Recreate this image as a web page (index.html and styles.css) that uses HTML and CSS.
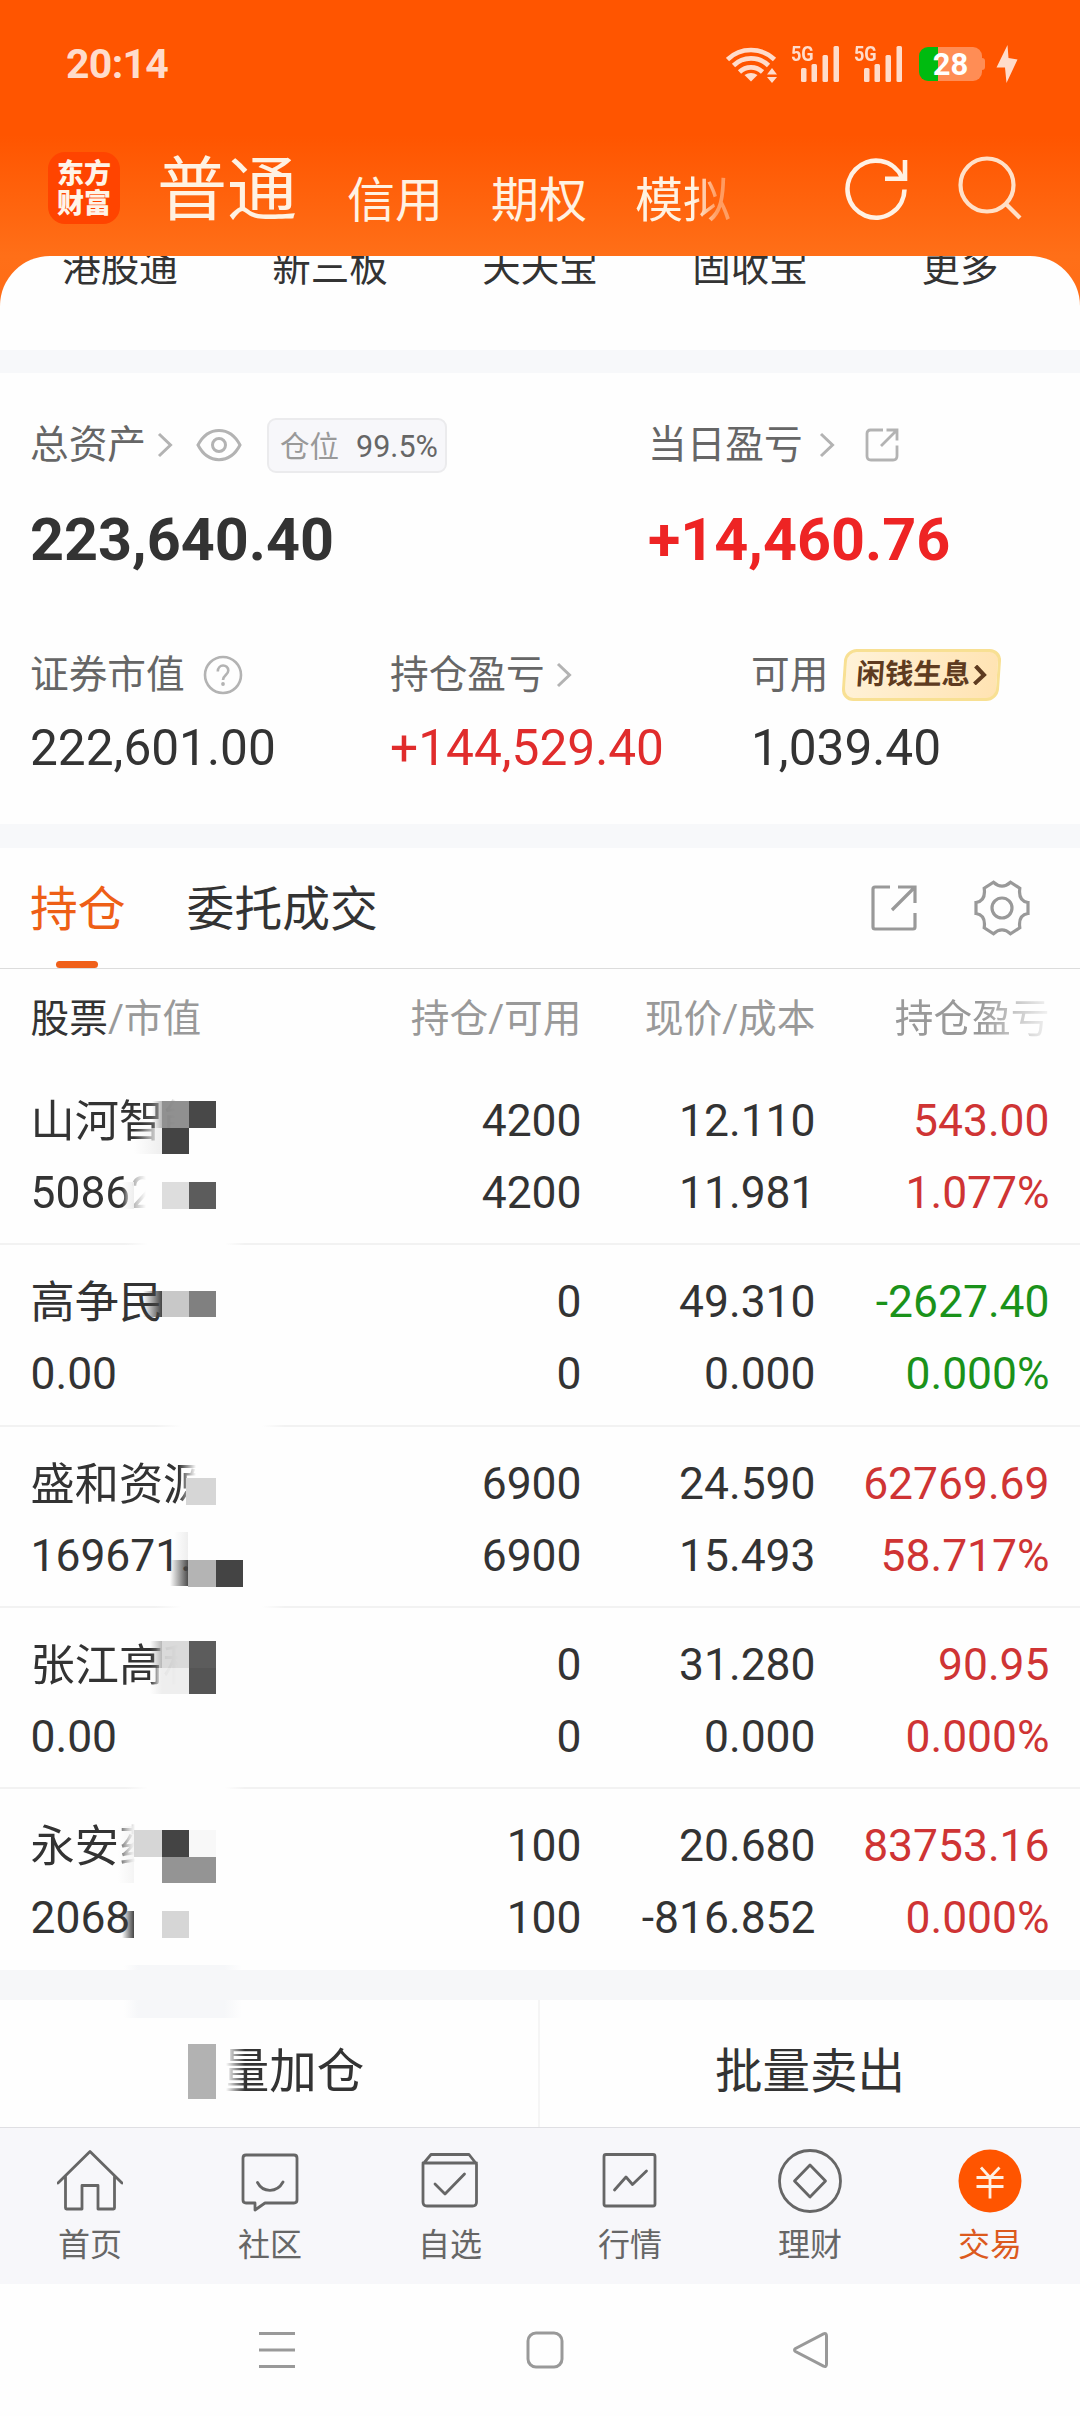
FILE: index.html
```html
<!DOCTYPE html>
<html lang="zh-CN">
<head>
<meta charset="utf-8">
<title>交易</title>
<link rel="stylesheet" href="styles.css">
</head>
<body>
<div class="phone">
  <header class="top">
    <div class="status">
      <span class="time">20:14</span>
      <div class="status-icons">
        <svg class="wifi" width="52" height="38" viewBox="0 0 52 38" fill="none" stroke="#ffdccb" stroke-width="4.6">
          <path d="M1.500 14.500a34 34 0 0 1 47 0M7.500 20.500a25 25 0 0 1 35 0M13.500 27a16.500 16.500 0 0 1 23 0"/>
          <path d="M25 36.500l-6.500-6.500q6.500-4 13 0z" fill="#ffdccb" stroke="none"/>
          <path d="M41 29.500l5-6.500 5 6.500zM41 32l5 6 5-6z" fill="#ffdccb" stroke="none"/>
        </svg>
        <div class="signal">
          <span class="net">5G</span>
          <svg width="38" height="36" viewBox="0 0 38 36" fill="#ffdccb"><rect x="0" y="22" width="5.500" height="14" rx="1.500"/><rect x="10.500" y="18" width="5.500" height="18" rx="1.500"/><rect x="21.500" y="9" width="5.500" height="27" rx="1.500"/><rect x="32.500" y="0" width="5.500" height="36" rx="1.500"/></svg>
        </div>
        <div class="signal second">
          <span class="net">5G</span>
          <svg width="38" height="36" viewBox="0 0 38 36" fill="#ffdccb"><rect x="0" y="22" width="5.500" height="14" rx="1.500"/><rect x="10.500" y="18" width="5.500" height="18" rx="1.500"/><rect x="21.500" y="9" width="5.500" height="27" rx="1.500"/><rect x="32.500" y="0" width="5.500" height="36" rx="1.500"/></svg>
        </div>
        <div class="battery">28</div>
        <svg class="bolt" width="22" height="38" viewBox="0 0 22 38" fill="#ffdccb"><path d="M11.500 0L.5 22.500h8.500L10.500 38 21.500 14.500 12.500 13z"/></svg>
      </div>
    </div>
    <div class="accounts">
      <div class="logo"><span>东方</span><span>财富</span></div>
      <div class="account-tabs">
        <span class="account active">普通</span>
        <span class="account">信用</span>
        <span class="account">期权</span>
        <span class="account faded">模拟</span>
      </div>
      <svg class="refresh" width="64" height="64" viewBox="0 0 64 64" fill="none" stroke="#fff1e4" stroke-width="4.6"><path d="M60.500 33.500A28.500 28.500 0 1 1 58 21.500"/><path d="M61 4v18.800H41"/></svg>
      <svg class="search" width="64" height="64" viewBox="0 0 64 64" fill="none" stroke="#ffe0c8" stroke-width="4.200"><circle cx="29" cy="29" r="26.500"/><path d="M48 48l14 14"/></svg>
    </div>
  </header>

  <main>
    <nav class="shortcuts"><span>港股通</span><span>新三板</span><span>天天宝</span><span>固收宝</span><span>更多</span></nav>

    <section class="assets">
      <div class="row-main">
        <div>
          <div class="label">总资产
            <svg class="chev" width="16" height="26" viewBox="0 0 16 26"><path d="M2 2l11.500 11L2 24"/></svg>
            <svg class="eye" width="46" height="34" viewBox="0 0 46 34"><path d="M2 17C12-2.500 34-2.500 44 17 34 36.500 12 36.500 2 17z"/><circle cx="23" cy="17" r="6.500"/></svg>
            <span class="ratio">仓位<b>99.5%</b></span>
          </div>
          <div class="big">223,640.40</div>
        </div>
        <div>
          <div class="label">当日盈亏
            <svg class="chev wide" width="16" height="26" viewBox="0 0 16 26"><path d="M2 2l11.500 11L2 24"/></svg>
            <svg class="share-small" width="36" height="36" viewBox="0 0 36 36"><path d="M19 3H6.500Q3 3 3 6.500V29q0 4 4 4h22q4 0 4-4V18.500M22.500 3H33v10.500M32.500 3.500L17 19"/></svg>
          </div>
          <div class="big red">+14,460.76</div>
        </div>
      </div>
      <div class="row-sub">
        <div>
          <div class="label">证券市值
            <svg class="help" width="40" height="40" viewBox="0 0 40 40"><circle cx="20" cy="20" r="18"/><path d="M14.800 16.500c0-8 10.500-7.500 10.500-1 0 4.500-5.300 4.500-5.300 9.500"/><circle class="dot" cx="20" cy="29" r="1.900"/></svg>
          </div>
          <div class="mid">222,601.00</div>
        </div>
        <div>
          <div class="label">持仓盈亏
            <svg class="chev near" width="16" height="26" viewBox="0 0 16 26"><path d="M2 2l11.500 11L2 24"/></svg>
          </div>
          <div class="mid red">+144,529.40</div>
        </div>
        <div>
          <div class="label">可用
            <span class="promo">闲钱生息<svg width="14" height="20" viewBox="0 0 14 20"><path d="M2 1l9 9-9 9"/></svg></span>
          </div>
          <div class="mid">1,039.40</div>
        </div>
      </div>
    </section>

    <section class="holdings">
      <div class="tabs">
        <span class="tab active">持仓</span>
        <span class="tab">委托成交</span>
        <svg class="share" width="48" height="48" viewBox="0 0 48 48"><path d="M20 3H5Q3 3 3 5v38q0 2 2 2h38q2 0 2-2V29M28 3h17v16M44.500 3.500L22 26"/></svg>
        <svg class="gear" width="58" height="58" viewBox="-29 -29 58 58"><path d="M-26 -5.500V5.500Q-16 7-17.800 19.800L-8.500 25.800Q0 18 8.500 25.800L17.800 19.800Q16 7 26 5.500V-5.500Q16-7 17.800-19.800L8.500-25.800Q0-18-8.500-25.800L-17.800-19.800Q-16-7-26-5.500z"/><circle r="10"/></svg>
      </div>
      <div class="grid head"><span><em>股票</em>/市值</span><span>持仓/可用</span><span>现价/成本</span><span class="head-fade">持仓盈亏</span></div>

      <div class="grid item gap-a">
        <span class="name fade-1">山河智能</span><span>4200</span><span>12.110</span><span class="up">543.00</span>
        <span class="fade-2">50862</span><span>4200</span><span>11.981</span><span class="up">1.077%</span>
      </div>
      <div class="grid item gap-b">
        <span class="name">高争民</span><span>0</span><span>49.310</span><span class="down">-2627.40</span>
        <span>0.00</span><span>0</span><span>0.000</span><span class="down">0.000%</span>
      </div>
      <div class="grid item gap-b">
        <span class="name fade-3">盛和资源</span><span>6900</span><span>24.590</span><span class="up">62769.69</span>
        <span>169671.</span><span>6900</span><span>15.493</span><span class="up">58.717%</span>
      </div>
      <div class="grid item gap-a">
        <span class="name fade-4">张江高科</span><span>0</span><span>31.280</span><span class="up">90.95</span>
        <span>0.00</span><span>0</span><span>0.000</span><span class="up">0.000%</span>
      </div>
      <div class="grid item last">
        <span class="name fade-5">永安药</span><span>100</span><span>20.680</span><span class="up">83753.16</span>
        <span>2068</span><span>100</span><span>-816.852</span><span class="up">0.000%</span>
      </div>

      <!-- privacy mosaic laid over the names and values -->
      <svg class="mosaic" width="300" height="1040" viewBox="0 1064 300 1040">
        <defs>
          <linearGradient id="g1"><stop offset="0" stop-color="#999" stop-opacity="0"/><stop offset="1" stop-color="#999" stop-opacity=".7"/></linearGradient>
          <linearGradient id="g2"><stop offset="0" stop-color="#444" stop-opacity="0"/><stop offset="1" stop-color="#444"/></linearGradient>
          <linearGradient id="g3"><stop offset="0" stop-color="#eee" stop-opacity="0"/><stop offset="1" stop-color="#eee"/></linearGradient>
          <linearGradient id="g4"><stop offset="0" stop-color="#f6f7f9" stop-opacity="0"/><stop offset=".12" stop-color="#f6f7f9"/><stop offset=".85" stop-color="#f6f7f9"/><stop offset="1" stop-color="#f6f7f9" stop-opacity="0"/></linearGradient>
        </defs>
        <rect x="152" y="1101" width="10" height="27" fill="url(#g1)"/>
        <rect x="162" y="1101" width="27" height="27" fill="#888" fill-opacity=".93"/>
        <rect x="189" y="1101" width="27" height="27" fill="#484848"/>
        <rect x="134" y="1128" width="28" height="26" fill="url(#g3)"/>
        <rect x="162" y="1128" width="27" height="26" fill="#444"/>
        <rect x="122" y="1182" width="12" height="27" fill="url(#g3)"/>
        <rect x="162" y="1182" width="27" height="27" fill="#ddd"/>
        <rect x="189" y="1182" width="27" height="27" fill="#5c5c5c"/>

        <rect x="143" y="1291" width="19" height="26" fill="url(#g2)"/>
        <rect x="162" y="1291" width="27" height="26" fill="#c8c8c8"/>
        <rect x="189" y="1291" width="27" height="26" fill="#808080"/>

        <rect x="186" y="1478" width="30" height="27" fill="#d6d6d6"/>
        <rect x="174" y="1532" width="14" height="28" fill="url(#g3)"/>
        <rect x="170" y="1560" width="19" height="26" fill="url(#g2)"/>
        <rect x="188" y="1560" width="28" height="27" fill="#b4b4b4"/>
        <rect x="216" y="1560" width="27" height="27" fill="#444"/>

        <rect x="150" y="1641" width="12" height="27" fill="url(#g1)"/>
        <rect x="162" y="1641" width="27" height="27" fill="#d4d4d4" fill-opacity=".85"/>
        <rect x="150" y="1668" width="12" height="26" fill="url(#g3)"/>
        <rect x="162" y="1668" width="27" height="26" fill="#ececec" fill-opacity=".9"/>
        <rect x="189" y="1641" width="27" height="27" fill="#5c5c5c"/>
        <rect x="189" y="1668" width="27" height="26" fill="#555"/>

        <rect x="118" y="1826" width="16" height="57" fill="url(#g3)" opacity=".6"/>
        <rect x="134" y="1830" width="28" height="27" fill="#d6d6d6"/>
        <rect x="162" y="1830" width="27" height="27" fill="#444"/>
        <rect x="189" y="1830" width="27" height="27" fill="#f8f8f8"/>
        <rect x="162" y="1857" width="54" height="26" fill="#949494"/>
        <rect x="122" y="1911" width="12" height="27" fill="url(#g2)"/>
        <rect x="162" y="1911" width="27" height="27" fill="#d6d6d6"/>
        <rect x="124" y="1965" width="118" height="53" fill="url(#g4)"/>
        <rect x="188" y="2044" width="28" height="55" fill="#b2b2b2"/>
      </svg>
    </section>

    <div class="batch"><span class="batch-add">量加仓</span><span>批量卖出</span></div>
  </main>

  <nav class="tabbar">
    <a><svg viewBox="-33 -33 66 66"><path d="M-32 2L0-29.500 32 2M-24.500-5V27Q-24.500 28-23.500 28H-8V4.500H8V28H23.500Q24.500 28 24.500 27V-5"/></svg>首页</a>
    <a><svg viewBox="-33 -33 66 66"><path d="M-24-26H24Q27-26 27-23V19Q27 22 24 22H-5L-15 29V22H-24Q-27 22-27 19V-23Q-27-26-24-26zM-12.500 1.500C-7 12 7 12 13 1"/></svg>社区</a>
    <a><svg viewBox="-33 -33 66 66"><path d="M-27-17L-19-26.500H19L26.500-17V21Q26.500 25 22.500 25H-23Q-27 25-27 21zM-27-18H26.500"/><path d="M-15 3L-5 13 14.500-7"/></svg>自选</a>
    <a><svg viewBox="-33 -33 66 66"><rect x="-26" y="-26.500" width="51" height="51.500" rx="2"/><path d="M-15.500 9L-4-4 2.500 3.500 16.500-10"/></svg>行情</a>
    <a><svg viewBox="-33 -33 66 66"><circle r="30.500"/><path d="M0-16L15.500 0 0 16-15.500 0z"/></svg>理财</a>
    <a class="current"><svg viewBox="-33 -33 66 66"><circle r="31.500"/><path d="M-9-13.500L0-3.500 9.500-13.500M-13.500-3.500H13.500M-13.500 5.500H13.500M0-3.500V17.500"/></svg>交易</a>
  </nav>
  <div class="sysnav">
    <svg class="sys-menu" width="36" height="38" viewBox="0 0 36 38"><path d="M0 2.500H36M0 19H36M0 35.500H36"/></svg>
    <svg class="sys-home" width="38" height="38" viewBox="0 0 38 38"><rect x="2" y="2" width="34" height="34" rx="8"/></svg>
    <svg class="sys-back" width="36" height="38" viewBox="0 0 36 38"><path d="M2.500 17.500L30.500 2.800Q33.500 1.500 33.500 5V33Q33.500 36.500 30.500 35.200L2.500 20.500Q.5 19 2.500 17.500z"/></svg>
  </div>
</div>
</body>
</html>
```
FILE: styles.css
```css
* { box-sizing: border-box; }
body { margin: 0; background: #fdfdfd; font-family: Roboto, "Noto Sans CJK SC", sans-serif; color: #333; }
svg { display: block; flex: none; }
.phone { width: 1080px; height: 2416px; overflow: hidden; display: flex; flex-direction: column; background: linear-gradient(#ff5500 135px, #ff6f18 256px, #ff6c16 310px); }

/* header */
.top { height: 256px; flex: none; }
.status { height: 128px; display: flex; justify-content: space-between; align-items: center; padding: 0 62px 0 66px; }
.time { font-weight: 700; font-size: 41px; color: #ffdccb; letter-spacing: -.7px; }
.status-icons { display: flex; align-items: center; }
.signal { display: flex; position: relative; width: 48px; justify-content: flex-end; margin-left: 13px; }
.signal.second { margin-left: 15px; }
.net { position: absolute; left: 0; top: -1px; font-size: 21px; line-height: 18px; font-weight: 700; color: #ffdccb; transform: scaleX(.86); transform-origin: left; }
.battery { position: relative; width: 63px; height: 34px; margin-left: 17px; border-radius: 9px; background: linear-gradient(90deg, #00bb10 19px, #ff8d55 19px); color: #fff; font-weight: 700; font-size: 31px; line-height: 35px; text-align: center; }
.battery::after { content: ""; position: absolute; right: -3px; top: 11px; width: 3px; height: 12px; border-radius: 0 3px 3px 0; background: #ff8d55; }
.bolt { margin-left: 14px; }
.accounts { height: 120px; display: flex; align-items: center; padding-left: 48px; }
.logo { width: 72px; height: 72px; border-radius: 17px; background: #ff4400; color: #fff4e8; font-weight: 900; font-size: 27px; line-height: 30px; display: flex; flex-direction: column; align-items: center; justify-content: center; padding-top: 2px; }
.account-tabs { display: flex; align-items: baseline; margin-left: 37px; width: 675px; padding-top: 9px; color: #fff2e2; }
.account { font-size: 48px; line-height: 72px; margin-right: 48px; position: relative; top: 4px; }
.account.active { font-size: 70px; margin-right: 50px; top: 2px; }
.account.faded { -webkit-mask-image: linear-gradient(90deg, #000 62%, rgba(0,0,0,.4) 85%); mask-image: linear-gradient(90deg, #000 62%, rgba(0,0,0,.4) 85%); }
.refresh { margin-left: 12px; }
.search { margin-left: 50px; }

/* page sheet */
main { height: 1871px; flex: none; border-radius: 50px 50px 0 0; background: #fefefe; overflow: hidden; }
.shortcuts { height: 94px; display: flex; padding: 0 15px; font-size: 38.500px; line-height: 50px; overflow: hidden; }
.shortcuts span { flex: 1; text-align: center; margin-top: -13px; }
.assets { height: 498px; border-top: 23px solid #f7f8fa; border-bottom: 24px solid #f7f8fa; padding-top: 44px; }
.row-main { display: grid; grid-template-columns: 618px 1fr; padding-left: 30px; height: 230px; }
.row-sub { display: grid; grid-template-columns: 360px 361px 1fr; padding-left: 30px; }
.label { display: flex; align-items: center; height: 56px; font-size: 38.700px; line-height: 58px; color: #666; white-space: nowrap; }
.big { font-size: 59.300px; font-weight: 700; line-height: 70px; margin-top: 32px; }
.mid { font-size: 49.600px; line-height: 60px; margin-top: 15px; }
.red { color: #e02c2c; }
.big.red { color: #ee2424; }
.chev, .eye, .share-small, .help { fill: none; stroke: #b3b3b3; stroke-width: 3; }
.chev { margin-left: 11px; }
.chev.wide { margin-left: 16px; }
.chev.near { margin-left: 11px; }
.eye { margin-left: 23px; }
.ratio { margin-left: 25px; width: 180px; height: 55px; border: 2px solid #ebebed; border-radius: 9px; background: #f7f7fa; font-size: 29.500px; line-height: 53px; padding-left: 11px; color: #999; }
.ratio b { font-weight: 400; font-size: 30.500px; color: #666; margin-left: 17px; }
.share-small { margin-left: 29px; stroke-width: 2.8; }
.help { margin-left: 18px; stroke-width: 2.6; }
.help .dot { fill: #b3b3b3; stroke: none; }
.promo { margin-left: 15px; height: 52px; width: 157px; display: flex; align-items: center; justify-content: center; gap: 2px; font-size: 28.500px; font-weight: 700; line-height: 50px; color: #5e3b20; border: 3px solid #f8e093; border-radius: 12px; transform: skewX(-4deg); background: linear-gradient(100deg, #fff2d8, #ffe3b2); }
.promo svg { fill: none; stroke: #5e3b20; stroke-width: 4; }

/* holdings */
.holdings { position: relative; height: 1152px; background: linear-gradient(#fefefe 1122px, #f6f7f9 1122px); }
.tabs { height: 121px; display: flex; align-items: center; padding-left: 30px; border-bottom: 1px solid #dcdcdc; font-size: 47.800px; }
.tab { line-height: 119px; position: relative; margin-right: 61px; padding-top: 5px; }
.tab.active { color: #ee5f16; }
.tab.active::after { content: ""; position: absolute; left: 26px; bottom: 2px; width: 42px; height: 7px; border-radius: 3.500px; background: #f0601a; }
.share, .gear { fill: none; stroke: #999; stroke-width: 3.200; }
.share { margin-left: 431px; }
.gear { margin-left: 55px; }
.grid { display: grid; grid-template-columns: 300px 251px 234px 234px; padding-left: 30.500px; justify-content: start; }
.grid > span { text-align: right; white-space: nowrap; }
.grid > span:nth-child(4n+1) { text-align: left; }
.head { height: 95px; font-size: 38.700px; line-height: 100px; color: #999; }
.head em { font-style: normal; color: #333; }
.head .head-fade { -webkit-mask-image: linear-gradient(90deg, #000 70%, rgba(0,0,0,.1) 100%); mask-image: linear-gradient(90deg, #000 70%, rgba(0,0,0,.1) 100%); }
.item { height: 181.250px; padding-top: 21px; grid-auto-rows: 72px; font-size: 44.400px; line-height: 72px; background: no-repeat bottom / 100% 2px; }
.item .name { font-size: 44.200px; line-height: 74px; }
.gap-a { background-image: linear-gradient(90deg, #f2f2f2 125px, #fefefe 148px, #fefefe 225px, #f2f2f2 245px); }
.gap-b { background-image: linear-gradient(90deg, #f2f2f2 155px, #fefefe 182px, #fefefe 262px, #f2f2f2 285px); }
.up { color: #cf3434; }
.down { color: #1a921a; }
.fade-1 { -webkit-mask-image: linear-gradient(90deg, #000 110px, rgba(0,0,0,.7) 131px, transparent 145px); mask-image: linear-gradient(90deg, #000 110px, rgba(0,0,0,.7) 131px, transparent 145px); }
.fade-2 { -webkit-mask-image: linear-gradient(90deg, #000 94px, rgba(0,0,0,.4) 101px, transparent 115px); mask-image: linear-gradient(90deg, #000 94px, rgba(0,0,0,.4) 101px, transparent 115px); }
.fade-3 { -webkit-mask-image: linear-gradient(90deg, #000 148px, transparent 165px); mask-image: linear-gradient(90deg, #000 148px, transparent 165px); }
.fade-4 { -webkit-mask-image: linear-gradient(90deg, #000 125px, rgba(0,0,0,.5) 131px, transparent 148px); mask-image: linear-gradient(90deg, #000 125px, rgba(0,0,0,.5) 131px, transparent 148px); }
.fade-5 { -webkit-mask-image: linear-gradient(90deg, #000 86px, transparent 104px); mask-image: linear-gradient(90deg, #000 86px, transparent 104px); }
.mosaic { position: absolute; left: 0; top: 216px; pointer-events: none; }

.batch { height: 127px; display: grid; grid-template-columns: 1fr 1fr; font-size: 47.500px; line-height: 145px; text-align: center; }
.batch .batch-add { padding-left: 48px; border-right: 2px solid #f5f5f5; }
.batch-add { -webkit-mask-image: linear-gradient(90deg, transparent 226px, #000 245px); mask-image: linear-gradient(90deg, transparent 226px, #000 245px); }

/* bottom navigation */
.tabbar { height: 157px; flex: none; display: grid; grid-template-columns: repeat(6, 1fr); background: #f7f7fa; border-top: 1px solid #dfdfe3; }
.tabbar a { display: flex; flex-direction: column; align-items: center; padding-top: 20px; font-size: 32px; line-height: 63px; color: #666; }
.tabbar svg { width: 66px; height: 66px; fill: none; stroke: #666; stroke-width: 2.800; stroke-linejoin: round; stroke-linecap: round; }
.tabbar .current { color: #dc5a1e; }
.tabbar .current svg { stroke: #fff0e4; stroke-linecap: butt; }
.current circle { fill: #ff5500; stroke: none; }
.sysnav { height: 132px; flex: none; display: flex; align-items: center; background: #fefefe; padding-left: 259px; }
.sysnav svg { fill: none; stroke: #999; stroke-width: 3; }
.sys-home { margin-left: 231px; }
.sys-back { margin-left: 229px; }
```
